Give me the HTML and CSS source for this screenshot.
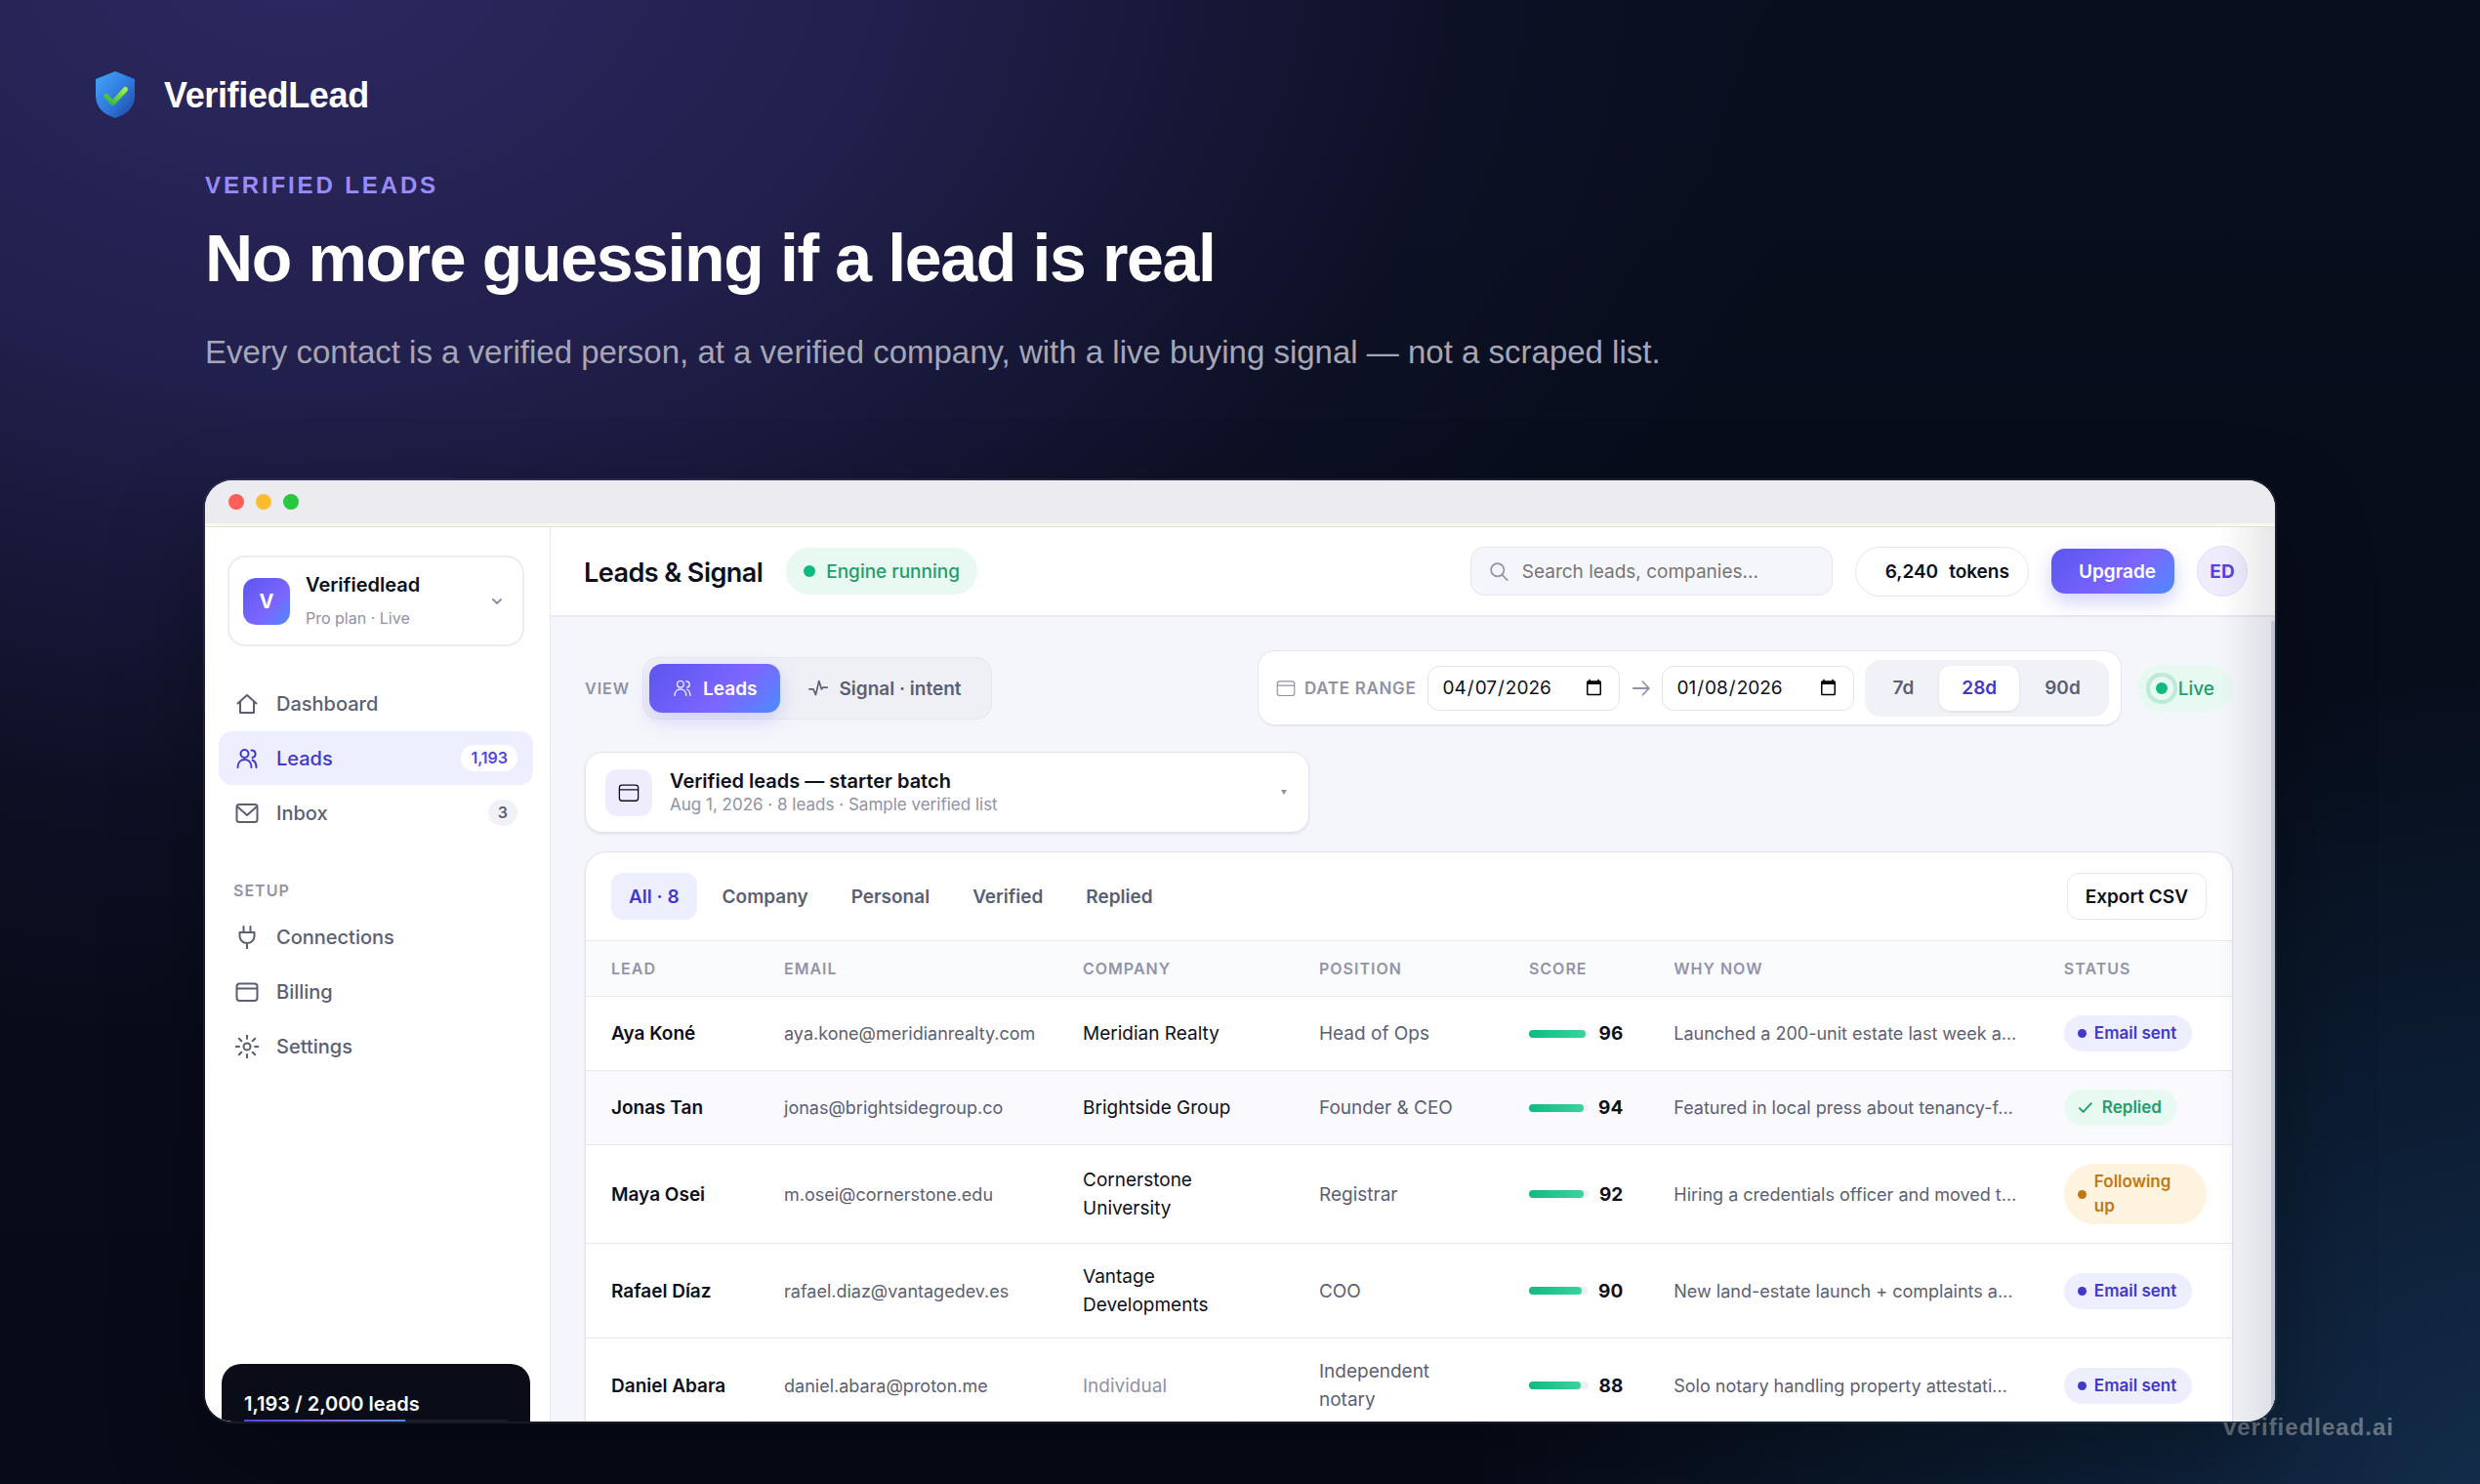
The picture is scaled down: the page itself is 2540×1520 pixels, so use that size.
FILE: index.html
```html
<!DOCTYPE html>
<html lang="en">
<head>
<meta charset="utf-8">
<title>VerifiedLead – Verified leads</title>
<link rel="stylesheet" href="styles.css">
</head>
<body>
<svg class="sprite" aria-hidden="true">
  <symbol id="i-home" viewBox="0 0 24 24"><path d="M2.500 11.500 12 3l9.500 8.500M5 9.500V21h14V9.500"/></symbol>
  <symbol id="i-users" viewBox="0 0 24 24"><circle cx="9.500" cy="7" r="4"/><path d="M2.500 21c0-5 3-8 7-8s7 3 7 8M16.500 3.500c5 0 5.500 6.500 1 7.500M17.500 13.500c2.500 1 4 3.500 4 7.500"/></symbol>
  <symbol id="i-mail" viewBox="0 0 24 24"><rect x="1.500" y="3" width="21" height="18" rx="2.500"/><path d="m2.500 5.500 9.500 8.500 9.500-8.500"/></symbol>
  <symbol id="i-plug" viewBox="0 0 24 24"><path d="M8.500 1v6M15.500 1v6M4.500 7h15v4a7.500 7 0 0 1-15 0zM12 18v6"/></symbol>
  <symbol id="i-card" viewBox="0 0 24 24"><rect x="1.500" y="3.500" width="21" height="17.500" rx="3"/><path d="M2 8.500h20"/></symbol>
  <symbol id="i-gear" viewBox="0 0 24 24"><circle cx="12" cy="12" r="3.500"/><path d="M12 .500v3.500M12 20v3.500M.500 12h3.500M20 12h3.500M3.800 3.800l2.500 2.500M17.700 17.700l2.500 2.500M3.800 20.200l2.500-2.500M17.700 6.300l2.500-2.500"/></symbol>
  <symbol id="i-pulse" viewBox="0 0 24 24"><path d="M1 13h5l3 7 4-17 3 10 2-2h5"/></symbol>
  <symbol id="i-search" viewBox="0 0 24 24"><circle cx="10.500" cy="10.500" r="8"/><path d="m16.500 17 6 6"/></symbol>
  <symbol id="i-arrow" viewBox="0 0 24 24"><path d="M1 12h21M14 3l8.500 9-8.500 9"/></symbol>
  <symbol id="i-chev" viewBox="0 0 24 24"><path d="m4 8 8 8 8-8"/></symbol>
  <symbol id="i-check" viewBox="0 0 24 24"><path d="m3 13 6 6L22 5"/></symbol>
</svg>
<div class="page">
  <header class="brand">
    <svg class="shield" viewBox="0 0 40 48" aria-hidden="true">
      <defs>
        <linearGradient id="g-shield" x1="0" y1="0" x2="1" y2="1"><stop offset="0" stop-color="#45a6f8"/><stop offset=".55" stop-color="#2f78de"/><stop offset="1" stop-color="#1c4696"/></linearGradient>
        <linearGradient id="g-tick" x1="1" y1="0" x2="0" y2="1"><stop offset="0" stop-color="#a3f53a"/><stop offset="1" stop-color="#2fb04a"/></linearGradient>
      </defs>
      <path d="M20 0 40 8v17c0 12-8 19-20 23C8 44 0 37 0 25V8z" fill="url(#g-shield)"/>
      <path d="m10.500 25.500 7 7 13-14" fill="none" stroke="url(#g-tick)" stroke-width="5" stroke-linecap="round" stroke-linejoin="round"/>
    </svg>
    <span class="brand-name">VerifiedLead</span>
  </header>
  <section class="hero">
    <p class="eyebrow">VERIFIED LEADS</p>
    <h1>No more guessing if a lead is real</h1>
    <p class="lede">Every contact is a verified person, at a verified company, with a live buying signal — not a scraped list.</p>
  </section>
  <div class="window">
    <div class="titlebar"><i class="red"></i><i class="amber"></i><i class="green"></i></div>
    <div class="app">
      <aside class="sidebar">
        <button class="workspace">
          <span class="ws-mark">V</span>
          <span class="ws-text"><b>Verifiedlead</b><small>Pro plan · Live</small></span>
          <svg class="ico chev"><use href="#i-chev"/></svg>
        </button>
        <nav class="nav">
          <a href="#"><svg class="ico"><use href="#i-home"/></svg>Dashboard</a>
          <a href="#" class="on"><svg class="ico"><use href="#i-users"/></svg>Leads<span class="count">1,193</span></a>
          <a href="#"><svg class="ico"><use href="#i-mail"/></svg>Inbox<span class="count">3</span></a>
          <h2>SETUP</h2>
          <a href="#"><svg class="ico"><use href="#i-plug"/></svg>Connections</a>
          <a href="#"><svg class="ico"><use href="#i-card"/></svg>Billing</a>
          <a href="#"><svg class="ico"><use href="#i-gear"/></svg>Settings</a>
        </nav>
        <div class="quota"><b>1,193 / 2,000 leads</b><div class="quota-bar"><span style="width:61%"></span></div></div>
      </aside>
      <main class="main">
        <div class="topbar">
          <h2>Leads &amp; Signal</h2>
          <span class="engine"><i></i>Engine running</span>
          <label class="search"><svg class="ico"><use href="#i-search"/></svg><input type="search" placeholder="Search leads, companies..." aria-label="Search leads"></label>
          <span class="tokens"><span>6,240</span><span>tokens</span></span>
          <button class="upgrade">Upgrade</button>
          <span class="avatar">ED</span>
        </div>
        <div class="content">
          <div class="tools">
            <span class="cap">VIEW</span>
            <div class="switch">
              <button class="on"><svg class="ico thin"><use href="#i-users"/></svg>Leads</button>
              <button><svg class="ico"><use href="#i-pulse"/></svg>Signal · intent</button>
            </div>
            <div class="range">
              <span class="cap"><svg class="ico thin"><use href="#i-card"/></svg>DATE RANGE</span>
              <input type="date" value="2026-04-07" aria-label="From">
              <svg class="ico arrow"><use href="#i-arrow"/></svg>
              <input type="date" value="2026-01-08" aria-label="To">
              <div class="days"><button>7d</button><button class="on">28d</button><button>90d</button></div>
            </div>
            <span class="live"><i></i>Live</span>
          </div>
          <button class="batch">
            <span class="batch-ico"><svg class="ico thin"><use href="#i-card"/></svg></span>
            <span class="batch-text"><b>Verified leads — starter batch</b><small>Aug 1, 2026 · 8 leads · Sample verified list</small></span>
            <i class="caret"></i>
          </button>
          <section class="card">
            <div class="tabs">
              <button class="on">All · 8</button><button>Company</button><button>Personal</button><button>Verified</button><button>Replied</button>
              <button class="export">Export CSV</button>
            </div>
            <table>
              <colgroup><col class="c1"><col class="c2"><col class="c3"><col class="c4"><col class="c5"><col class="c6"><col></colgroup>
              <thead><tr><th>LEAD</th><th>EMAIL</th><th>COMPANY</th><th>POSITION</th><th>SCORE</th><th>WHY NOW</th><th>STATUS</th></tr></thead>
              <tbody>
                <tr><td class="name">Aya Koné</td><td class="mail">aya.kone@meridianrealty.com</td><td>Meridian Realty</td><td class="pos">Head of Ops</td><td><div class="score"><div class="meter"><span style="width:96%"></span></div>96</div></td><td class="why">Launched a 200-unit estate last week a…</td><td><span class="badge sent"><i></i>Email sent</span></td></tr>
                <tr class="hover"><td class="name">Jonas Tan</td><td class="mail">jonas@brightsidegroup.co</td><td>Brightside Group</td><td class="pos">Founder &amp; CEO</td><td><div class="score"><div class="meter"><span style="width:94%"></span></div>94</div></td><td class="why">Featured in local press about tenancy-f…</td><td><span class="badge replied"><svg class="ico"><use href="#i-check"/></svg>Replied</span></td></tr>
                <tr><td class="name">Maya Osei</td><td class="mail">m.osei@cornerstone.edu</td><td>Cornerstone University</td><td class="pos">Registrar</td><td><div class="score"><div class="meter"><span style="width:92%"></span></div>92</div></td><td class="why">Hiring a credentials officer and moved t…</td><td><span class="badge follow"><i></i>Following up</span></td></tr>
                <tr><td class="name">Rafael Díaz</td><td class="mail">rafael.diaz@vantagedev.es</td><td>Vantage Developments</td><td class="pos">COO</td><td><div class="score"><div class="meter"><span style="width:90%"></span></div>90</div></td><td class="why">New land-estate launch + complaints a…</td><td><span class="badge sent"><i></i>Email sent</span></td></tr>
                <tr><td class="name">Daniel Abara</td><td class="mail">daniel.abara@proton.me</td><td class="none">Individual</td><td class="pos">Independent notary</td><td><div class="score"><div class="meter"><span style="width:88%"></span></div>88</div></td><td class="why">Solo notary handling property attestati…</td><td><span class="badge sent"><i></i>Email sent</span></td></tr>
              </tbody>
            </table>
          </section>
        </div>
      </main>
    </div>
  </div>
  <span class="site">verifiedlead.ai</span>
</div>
</body>
</html>
```
FILE: styles.css
```css
* { box-sizing: border-box; }
body { margin: 0; background: #060912; }
h1, h2, p { margin: 0; }
button, input { font: inherit; color: inherit; margin: 0; }
button { border: 0; background: none; cursor: pointer; padding: 0; }
.sprite { display: none; }

.page {
  position: relative;
  isolation: isolate;
  display: flex;
  flex-direction: column;
  height: 100vh;
  padding-bottom: 64px;
  overflow: hidden;
  font-family: "Liberation Sans", Arial, sans-serif;
  background:
    radial-gradient(62% 76% at 12% -4%, #2d2962 0%, #211f4b 40%, rgba(17, 19, 44, .6) 76%, transparent 100%),
    radial-gradient(45% 60% at 104% 104%, #14304f 0%, #0c1d33 50%, transparent 100%),
    linear-gradient(180deg, #070e1d, #070b17);
}

.brand { display: flex; align-items: center; gap: 30px; height: 56px; margin-top: 69px; padding-left: 98px; }
.shield { width: 40px; height: 48px; }
.brand-name { color: #fff; font-size: 36px; line-height: 40px; padding-top: 1px; font-weight: 700; letter-spacing: -0.01em; }

.hero { padding: 51px 210px 0; }
.eyebrow { color: #9b8afb; font-size: 24px; line-height: 28px; font-weight: 700; letter-spacing: 0.12em; }
h1 { margin-top: 22px; color: #fff; font-size: 68px; line-height: 76px; letter-spacing: -0.02em; }
.lede { margin-top: 37px; color: #a5a6b6; font-size: 33px; line-height: 44px; }

.site { position: absolute; z-index: -1; right: 88px; bottom: 44px; color: #6a7482; font-size: 24px; line-height: 28px; font-weight: 700; letter-spacing: 1px; }

.window {
  flex: 1;
  min-height: 0;
  display: flex;
  flex-direction: column;
  margin: 109px 210px 0;
  border-radius: 28px;
  overflow: hidden;
  background: #fff;
  color: #0d101c;
  font-family: Inter, "Noto Sans", sans-serif;
  font-size: 19px;
  box-shadow: 0 0 0 2px rgba(255, 255, 255, .08), 0 40px 100px rgba(0, 0, 0, .3);
}
.titlebar { flex: none; display: flex; align-items: center; gap: 12px; height: 48px; padding: 0 24px 4px; background: #ecebf0; border-bottom: 1px solid #dfe0dc; box-shadow: inset 0 -3px #f9f9ea; }
.titlebar i { width: 16px; height: 16px; border-radius: 50%; }
.red { background: #ff5f57; }
.amber { background: #febc2e; }
.green { background: #28c840; }

.app { position: relative; flex: 1; min-height: 0; display: grid; grid-template-columns: 354px minmax(0, 1fr); }
.app::after { content: ""; position: absolute; inset: 0 0 0 auto; width: 56px; background: linear-gradient(90deg, transparent, rgba(20, 22, 40, .1)); pointer-events: none; }

.ico { flex: none; width: 24px; height: 24px; fill: none; stroke: currentColor; stroke-width: 2; stroke-linecap: round; stroke-linejoin: round; }
.thin { stroke-width: 1.4; }

.sidebar { display: flex; flex-direction: column; padding: 29px 17px 0 14px; border-right: 1px solid #e8e8ee; background: #fff; overflow: hidden; }
.workspace { flex: none; display: flex; align-items: center; gap: 16px; height: 93px; margin: 0 9px; padding: 0 20px 0 14px; border: 2px solid #ececf2; border-radius: 18px; text-align: left; }
.ws-mark { display: grid; place-items: center; width: 48px; height: 48px; border-radius: 13px; color: #fff; font-size: 20px; font-weight: 700; background: linear-gradient(135deg, #5b55f0, #7c66ff 60%, #4d8bff); }
.ws-text { flex: 1; display: grid; gap: 6px; }
.ws-text b { font-size: 20px; line-height: 28px; font-weight: 600; }
.ws-text small { font-size: 16px; line-height: 28px; color: #8f92a6; }
.chev { width: 12px; height: 12px; stroke-width: 4; color: #8f92a6; }

.nav { display: flex; flex-direction: column; gap: 1px; padding-top: 31px; color: #5b5f75; }
.nav a { display: flex; align-items: center; gap: 18px; height: 55px; padding: 0 16px 0 17px; border-radius: 14px; color: inherit; font-size: 20px; font-weight: 500; text-decoration: none; }
.nav a.on { background: #eeeffe; color: #4338ca; }
.nav h2 { padding: 41px 15px 9px; font-size: 16px; line-height: 20px; font-weight: 600; letter-spacing: 1px; color: #9194a9; }
.count { margin-left: auto; min-width: 29px; padding: 0 10px; border-radius: 14px; background: #f1f2f8; font-size: 16px; line-height: 27px; font-weight: 600; text-align: center; }
.on .count { background: #fff; color: #4f46e5; }

.quota { margin: auto 3px 0; padding: 27px 23px 0; border-radius: 20px 20px 0 0; background: #0a0d18; color: #fff; }
.quota b { display: block; font-size: 20px; line-height: 28px; font-weight: 600; }
.quota-bar { margin-top: 2px; height: 2px; background: #1c1f2a; }
.quota-bar span { display: block; height: 2px; background: linear-gradient(90deg, #4f46e5, #7c66ff 60%, #4d8bff); }

.main { position: relative; display: flex; flex-direction: column; min-width: 0; overflow: hidden; background: #f5f6fb; }
/* scrollbar track on the right edge */
.main::after { content: ""; position: absolute; inset: 96px 0 0 auto; width: 4px; background: #d5d9e6; }
.topbar { flex: none; display: flex; align-items: center; height: 92px; padding: 0 28px 0 34px; border-bottom: 2px solid #e8e8ee; background: #fff; }
.topbar h2 { padding-top: 2px; font-size: 27px; font-weight: 600; letter-spacing: -0.02em; }
.engine { display: flex; align-items: center; gap: 11px; height: 48px; margin-left: 24px; padding: 0 18px; border-radius: 24px; background: #e7f9f1; color: #1f9d6c; font-weight: 500; }
.engine i { width: 12px; height: 12px; border-radius: 50%; background: #10b981; }
.search { display: flex; align-items: center; gap: 14px; width: 371px; height: 50px; margin-left: auto; padding: 0 18px; border: 1px solid #e5e6ee; border-radius: 14px; background: #f5f6fb; color: #8f92a6; }
.search .ico { width: 20px; height: 20px; }
.search input { flex: 1; min-width: 0; border: 0; padding: 0; background: none; outline: 0; }
.search input::placeholder { color: #757575; }
.tokens { display: flex; gap: 11px; align-items: center; height: 51px; margin-left: 23px; padding: 0 19px 0 30px; border: 1px solid #e5e6ee; border-radius: 26px; font-weight: 600; }
.upgrade { height: 46px; margin-left: 23px; padding: 0 19px 0 28px; border-radius: 14px; color: #fff; font-weight: 600; background: linear-gradient(135deg, #5b55f0, #7c66ff 60%, #4d8bff); box-shadow: 0 8px 20px rgba(91, 85, 240, .28); }
.avatar { display: grid; place-items: center; width: 52px; height: 52px; margin-left: 23px; border: 1px solid #e2ddfb; border-radius: 50%; background: #efedfd; color: #4f46e5; font-weight: 700; }

.content { padding: 34px 43px 0 35px; }
.tools { display: flex; align-items: center; }
.cap { display: flex; align-items: center; gap: 9px; color: #8f92a6; font-size: 16px; font-weight: 600; letter-spacing: 1px; }
.switch { display: flex; margin-left: 13px; padding: 6px; border: 1px solid #e7e8f0; border-radius: 16px; background: #eff0f6; color: #5b5f75; }
.switch button { display: flex; align-items: center; gap: 11px; height: 50px; padding: 0 24px 0 29px; border-radius: 13px; font-weight: 600; }
.switch .ico { width: 20px; height: 20px; }
.switch button.on { padding: 0 24px; color: #fff; background: linear-gradient(135deg, #5b55f0, #7c66ff 60%, #4d8bff); box-shadow: 0 8px 20px rgba(91, 85, 240, .22); }
.range { display: flex; align-items: center; height: 78px; margin-left: auto; padding: 0 12px 0 18px; border: 1px solid #e5e6ee; border-bottom-width: 2px; border-radius: 18px; background: #fff; }
.range .cap { font-size: 17px; letter-spacing: 0.04em; }
.range .ico { width: 20px; height: 20px; }
.range input { width: 197px; height: 46px; margin-left: 11px; padding: 0 14px; border: 1px solid #e2e3ec; border-radius: 12px; background: #fff; }
.range .arrow { width: 18px; height: 18px; margin: 0 1px 0 13px; color: #8f92a6; stroke-width: 2.4; }
.days { display: flex; gap: 3px; margin-left: 11px; padding: 6px; border-radius: 16px; background: #f1f2f8; color: #5b5f75; }
.days button { height: 46px; padding: 0 23px; border-radius: 12px; font-weight: 600; }
.days .on { background: #fff; color: #4338ca; box-shadow: 0 1px 3px rgba(20, 22, 40, .1); }
.live { display: flex; align-items: center; gap: 11px; height: 48px; margin-left: 16px; padding: 0 19px; border-radius: 24px; background: #e7f9f1; color: #1f9d6c; font-weight: 500; }
.live i { width: 12px; height: 12px; border-radius: 50%; background: #10b981; box-shadow: 0 0 0 6px #e7f9f1, 0 0 0 10px #bfe9d9; }

.batch { display: flex; align-items: center; gap: 18px; width: 742px; height: 83px; margin-top: 26px; padding: 0 22px 0 20px; border: 1px solid #e2e3ec; border-radius: 18px; background: #fff; box-shadow: 0 2px 3px rgba(20, 22, 40, .07); text-align: left; }
.batch-ico { display: grid; place-items: center; width: 48px; height: 48px; border-radius: 12px; background: #efedfd; }
.batch-ico .ico { width: 22px; height: 22px; }
.batch-text { flex: 1; display: grid; }
.batch-text b { font-size: 20px; line-height: 24px; font-weight: 600; }
.batch-text small { font-size: 17px; line-height: 24px; color: #8f92a6; }
.caret { border: 3px solid transparent; border-top: 5px solid #8f92a6; border-bottom: 0; }

.card { margin-top: 19px; border: 1px solid #e2e3ec; border-radius: 22px 22px 0 0; background: #fff; box-shadow: 0 1px 3px rgba(20, 22, 40, .08); overflow: hidden; }
.tabs { display: flex; align-items: center; gap: 8px; height: 90px; padding: 0 26px; }
.tabs button { height: 48px; padding: 0 18px; border-radius: 12px; color: #5b5f75; font-weight: 600; }
.tabs button.on { background: #eeeffe; color: #4338ca; }
.tabs button.export { margin-left: auto; border: 1px solid #e5e6ee; color: #0d101c; }

table { width: 100%; table-layout: fixed; border-collapse: collapse; }
.c1 { width: 10.5%; }
.c2 { width: 18.15%; }
.c3 { width: 14.35%; }
.c4 { width: 12.75%; }
.c5 { width: 8.8%; }
.c6 { width: 23.7%; }
th { height: 57px; padding: 0 26px; border-top: 1px solid #e8e9f0; border-bottom: 1px solid #e8e9f0; background: #fafbfd; color: #9194a9; font-size: 16px; font-weight: 600; letter-spacing: 1px; text-align: left; }
td { padding: 19px 26px; border-bottom: 1px solid #e8e9f0; line-height: 29px; }
.hover td { background: #f9f9fe; }
.name { font-weight: 600; white-space: nowrap; }
.mail, .why { font-size: 18px; color: #5b5f75; white-space: nowrap; }
.pos { color: #5b5f75; }
.none { color: #8f92a6; }
.score { display: flex; align-items: center; gap: 11px; font-weight: 700; }
.meter { width: 62px; height: 8px; border-radius: 4px; background: #eeeff5; }
.meter span { display: block; height: 8px; border-radius: 4px; background: linear-gradient(90deg, #12b981, #3ad49c); }
.badge { display: flex; align-items: center; gap: 8px; width: fit-content; padding: 6px 16px 6px 14px; border-radius: 32px; font-size: 17px; line-height: 25px; font-weight: 600; }
.badge i { flex: none; width: 9px; height: 9px; border-radius: 50%; background: currentColor; }
.badge .ico { width: 15px; height: 15px; margin-right: 2px; stroke-width: 3; }
.sent { background: #eeeffe; color: #4338ca; }
.replied { background: #e7f9f1; color: #1f9d6c; }
.follow { background: #fef3df; color: #bd7a14; }
```
